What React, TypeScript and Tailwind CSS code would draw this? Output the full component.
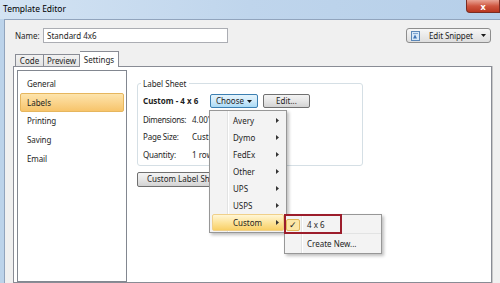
import React from 'react';

const DownArrow = () => (
  <svg width="5" height="3" viewBox="0 0 5 3">
    <path d="M0 0h5L2.5 3z" fill="#1a1a1a" />
  </svg>
);

const RightArrow = () => (
  <svg width="3" height="5" viewBox="0 0 3 5">
    <path d="M0 0v5l3-2.5z" fill="#333" />
  </svg>
);

const SnippetIcon = () => (
  <svg width="9" height="10" viewBox="0 0 9 10">
    <rect x="0.5" y="0.5" width="8" height="9" fill="#d7e8f8" stroke="#5b87b8" />
    <path d="M2 7.5l2-4 2 4z" fill="#3f74b5" />
    <rect x="2" y="2" width="5" height="1" fill="#7fa6d3" />
  </svg>
);

const menuItems = ['Avery', 'Dymo', 'FedEx', 'Other', 'UPS', 'USPS'];
const navItems = ['General', 'Labels', 'Printing', 'Saving', 'Email'];

const ChooseMenu = () => (
  <div className="absolute left-[-1px] top-[calc(100%+2px)] z-10 w-[78px] border border-[#979797] bg-[#f3f3f3] py-[1px] shadow-[2px_2px_3px_rgba(0,0,0,0.25)]">
    <div className="absolute left-[17px] top-0 bottom-0 w-px bg-[#e2e3e3]" />
    <div className="absolute left-[18px] top-0 bottom-0 w-px bg-white" />
    {menuItems.map((m) => (
      <div key={m} className="relative flex h-[17px] items-center justify-between pl-[23px] pr-[7px]">
        <span>{m}</span>
        <RightArrow />
      </div>
    ))}
    <div className="relative mx-[2px] flex h-[17px] items-center justify-between rounded-[2px] border border-[#f0d08a] bg-gradient-to-b from-[#fff6d6] via-[#fde49a] to-[#f8cf63] pl-[20px] pr-[4px]">
      <span>Custom</span>
      <RightArrow />
      {/* submenu */}
      <div className="absolute left-[calc(100%+1px)] top-[-1px] w-[98px] border border-[#979797] bg-[#f3f3f3] py-[1px] shadow-[2px_2px_3px_rgba(0,0,0,0.25)]">
        <div className="absolute left-[16px] top-0 bottom-0 w-px bg-[#e2e3e3]" />
        <div className="absolute left-[17px] top-0 bottom-0 w-px bg-white" />
        <div className="relative flex h-[17px] items-center pl-[1px]">
          <div className="flex h-[12px] w-[14px] items-center justify-center rounded-[2px] border border-[#e3b85a] bg-[#fce7a6] text-[9px] leading-none text-[#222]">
            ✓
          </div>
          <span className="ml-[7px]">4 x 6</span>
        </div>
        <div className="relative ml-[19px] h-[2px] border-t border-[#e2e3e3] border-b-white" />
        <div className="relative flex h-[17px] items-center pl-[22px]">Create New...</div>
        <div className="absolute left-[-1px] top-[-1px] h-[20px] w-[58px] border-2 border-[#9c1d2b]" />
      </div>
    </div>
  </div>
);

const App = () => {
  return (
    <div className="flex h-[283px] w-[500px] flex-col overflow-hidden bg-[#bcd3ea] font-['Noto_Sans',sans-serif] text-[8px] text-[#1e1e1e]">
      {/* title bar */}
      <div className="flex h-[19px] shrink-0 justify-between bg-gradient-to-r from-[#d3e3f3] via-[#bfd5ec] to-[#b6cfe9]">
        <div className="pl-[3px] pt-[3px] text-[8.5px] text-black">Template Editor</div>
        <div className="flex h-[13px] w-[34px] items-center justify-center rounded-bl-[4px] border border-t-0 border-[#7a2c22] bg-gradient-to-b from-[#e8a496] via-[#cf5640] to-[#b9361f] text-[9px] font-bold leading-none text-white">
          x
        </div>
      </div>

      {/* window body */}
      <div className="ml-[4px] flex flex-1 flex-col border-l border-t border-[#91a4bd] bg-[#f0f0f0]">
        <div className="mt-[8px] flex items-center justify-between pr-[9px]">
          <div className="flex items-center pl-[10px]">
            <span className="w-[28px]">Name:</span>
            <div className="flex h-[15px] w-[185px] items-center border border-[#abadb3] bg-white pl-[3px]">
              Standard 4x6
            </div>
          </div>
          <div className="flex h-[15px] w-[85px] items-center rounded-[3px] border border-[#8d8d8d] bg-gradient-to-b from-[#f6f6f6] to-[#dedede] pl-[4px] pr-[4px]">
            <SnippetIcon />
            <span className="ml-[9px] flex-1 tracking-[-0.1px]">Edit Snippet</span>
            <DownArrow />
          </div>
        </div>

        {/* tabs */}
        <div className="ml-[9px] mt-[8px] flex h-[15px] items-end pl-[1px]">
          <div className="flex h-[12px] w-[29px] items-center justify-center border border-b-0 border-[#898c95] bg-gradient-to-b from-[#f2f2f2] to-[#e3e3e3]">
            Code
          </div>
          <div className="flex h-[12px] w-[36px] items-center justify-center border border-b-0 border-l-0 border-[#898c95] bg-gradient-to-b from-[#f2f2f2] to-[#e3e3e3]">
            Preview
          </div>
          <div className="relative z-[1] -mb-px flex h-[16px] w-[39px] items-center justify-center border border-b-0 border-l-0 border-[#898c95] bg-white">
            Settings
          </div>
        </div>

        {/* tab panel */}
        <div className="ml-[8px] mr-[8px] flex flex-1 border border-[#898c95] bg-white pl-[3px] pt-[3px] shadow-[1px_0_0_#c8c8c8]">
          <div className="flex w-[110px] flex-col border border-[#828790] pt-[3.5px]">
            {navItems.map((n) =>
              n === 'Labels' ? (
                <div key={n} className="mx-[2px] flex h-[18.75px] items-center rounded-[2px] border border-[#e6b65e] bg-gradient-to-b from-[#fde4ac] to-[#f7c46a] pl-[6px]">
                  {n}
                </div>
              ) : (
                <div key={n} className="flex h-[18.75px] items-center pl-[9px] tracking-[-0.1px]">
                  {n}
                </div>
              )
            )}
          </div>

          <div className="ml-[10px] mt-[8px] flex flex-col items-start">
            <fieldset className="w-[226px] rounded-[3px] border border-[#d5dfe5] pb-[1px] pl-[5px]">
              <legend className="ml-[-2px] px-[2px] leading-[11px]">Label Sheet</legend>
              <div className="mt-[5px] flex h-[14px] items-center">
                <span className="w-[67px] font-bold">Custom - 4 x 6</span>
                <div className="relative">
                  <div className="flex h-[14px] w-[48px] items-center justify-center gap-[3px] rounded-[2px] border border-[#3c7fb1] bg-gradient-to-b from-[#e5f4fc] via-[#cfeafa] to-[#a9daf5]">
                    <span>Choose</span>
                    <DownArrow />
                  </div>
                  <ChooseMenu />
                </div>
                <div className="ml-[5px] flex h-[14px] w-[47px] items-center justify-center rounded-[2px] border border-[#707070] bg-gradient-to-b from-[#f3f3f3] via-[#e6e6e6] to-[#d3d3d3]">
                  Edit...
                </div>
              </div>
              <div className="mt-[3px] flex h-[17.5px] items-center">
                <span className="w-[49px] tracking-[-0.3px]">Dimensions:</span>
                <span>4.00"</span>
              </div>
              <div className="flex h-[17.5px] items-center">
                <span className="w-[49px] tracking-[-0.2px]">Page Size:</span>
                <span>Custom</span>
              </div>
              <div className="flex h-[17.5px] items-center">
                <span className="w-[49px] tracking-[-0.2px]">Quantity:</span>
                <span>1 row</span>
              </div>
            </fieldset>
            <div className="mt-[6px] flex h-[15px] w-[108px] items-center rounded-[2px] border border-[#707070] bg-gradient-to-b from-[#f3f3f3] via-[#e6e6e6] to-[#d3d3d3] pl-[9px]">
              Custom Label Sheets...
            </div>
          </div>
        </div>
      </div>
    </div>
  );
};

export default App;
